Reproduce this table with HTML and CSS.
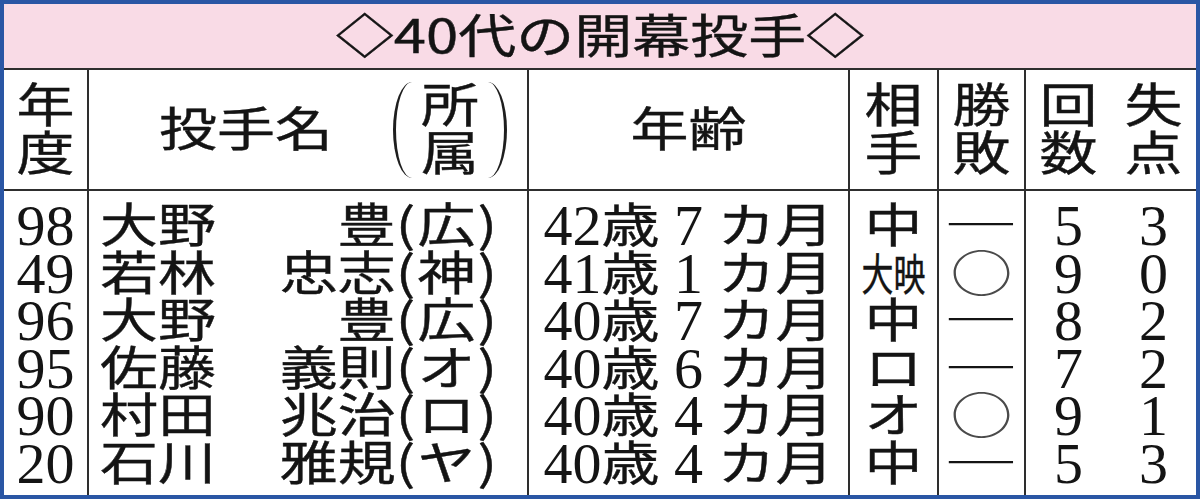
FILE: index.html
```html
<!DOCTYPE html>
<html lang="ja">
<head>
<meta charset="utf-8">
<title>40代の開幕投手</title>
<link rel="stylesheet" href="styles.css">
</head>
<body>
<div class="board">
  <div class="title"><span class="k">◇40代の開幕投手◇</span></div>
  <div class="table">
    <div class="row head">
      <div class="cell"><div class="stack"><span class="k">年</span><span class="k">度</span></div></div>
      <div class="cell name"><span class="k">投手名</span><span class="aff"><span class="stack"><span class="k">所</span><span class="k">属</span></span></span></div>
      <div class="cell"><span class="k">年齢</span></div>
      <div class="cell"><div class="stack"><span class="k">相</span><span class="k">手</span></div></div>
      <div class="cell"><div class="stack"><span class="k">勝</span><span class="k">敗</span></div></div>
      <div class="cell"><div class="stack"><span class="k">回</span><span class="k">数</span></div></div>
      <div class="cell"><div class="stack"><span class="k">失</span><span class="k">点</span></div></div>
    </div>
    <div class="row first">
      <div class="cell"><span class="num">98</span></div>
      <div class="cell name"><span class="k fam">大野</span><span class="k">豊</span><span class="k team">(広)</span></div>
      <div class="cell"><span class="num">42</span><span class="k">歳</span><span class="num fw">7</span><span class="k">カ月</span></div>
      <div class="cell"><span class="k">中</span></div>
      <div class="cell"><span class="k mark">―</span></div>
      <div class="cell"><span class="num">5</span></div>
      <div class="cell"><span class="num">3</span></div>
    </div>
    <div class="row">
      <div class="cell"><span class="num">49</span></div>
      <div class="cell name"><span class="k fam">若林</span><span class="k">忠志</span><span class="k team">(神)</span></div>
      <div class="cell"><span class="num">41</span><span class="k">歳</span><span class="num fw">1</span><span class="k">カ月</span></div>
      <div class="cell"><span class="k small">大映</span></div>
      <div class="cell"><span class="k circle">○</span></div>
      <div class="cell"><span class="num">9</span></div>
      <div class="cell"><span class="num">0</span></div>
    </div>
    <div class="row">
      <div class="cell"><span class="num">96</span></div>
      <div class="cell name"><span class="k fam">大野</span><span class="k">豊</span><span class="k team">(広)</span></div>
      <div class="cell"><span class="num">40</span><span class="k">歳</span><span class="num fw">7</span><span class="k">カ月</span></div>
      <div class="cell"><span class="k">中</span></div>
      <div class="cell"><span class="k mark">―</span></div>
      <div class="cell"><span class="num">8</span></div>
      <div class="cell"><span class="num">2</span></div>
    </div>
    <div class="row">
      <div class="cell"><span class="num">95</span></div>
      <div class="cell name"><span class="k fam">佐藤</span><span class="k">義則</span><span class="k team">(オ)</span></div>
      <div class="cell"><span class="num">40</span><span class="k">歳</span><span class="num fw">6</span><span class="k">カ月</span></div>
      <div class="cell"><span class="k">ロ</span></div>
      <div class="cell"><span class="k mark">―</span></div>
      <div class="cell"><span class="num">7</span></div>
      <div class="cell"><span class="num">2</span></div>
    </div>
    <div class="row">
      <div class="cell"><span class="num">90</span></div>
      <div class="cell name"><span class="k fam">村田</span><span class="k">兆治</span><span class="k team">(ロ)</span></div>
      <div class="cell"><span class="num">40</span><span class="k">歳</span><span class="num fw">4</span><span class="k">カ月</span></div>
      <div class="cell"><span class="k">オ</span></div>
      <div class="cell"><span class="k circle">○</span></div>
      <div class="cell"><span class="num">9</span></div>
      <div class="cell"><span class="num">1</span></div>
    </div>
    <div class="row last">
      <div class="cell"><span class="num">20</span></div>
      <div class="cell name"><span class="k fam">石川</span><span class="k">雅規</span><span class="k team">(ヤ)</span></div>
      <div class="cell"><span class="num">40</span><span class="k">歳</span><span class="num fw">4</span><span class="k">カ月</span></div>
      <div class="cell"><span class="k">中</span></div>
      <div class="cell"><span class="k mark">―</span></div>
      <div class="cell"><span class="num">5</span></div>
      <div class="cell"><span class="num">3</span></div>
    </div>
  </div>
</div>
</body>
</html>
```

FILE: styles.css
```css
html, body {
  margin: 0;
  padding: 0;
  background: #ffffff;
}

.board {
  width: 1200px;
  height: 499px;
  box-sizing: border-box;
  border: 4px solid #2a56a4;
  background: #ffffff;
  display: flex;
  flex-direction: column;
  color: #141414;
}

.title {
  height: 66px;
  flex: none;
  box-sizing: border-box;
  background: #f9dbe6;
  border-bottom: 2px solid #2e2e2e;
  display: flex;
  align-items: center;
  justify-content: center;
}

.title .k {
  line-height: 64px;
}

.table {
  flex: 1;
  display: grid;
  grid-template-columns: 85px 440px 321px 89px 87px 85px 85px;
}

.row {
  display: contents;
}

.cell {
  display: flex;
  align-items: center;
  justify-content: center;
  box-sizing: border-box;
}

.cell:nth-child(-n+5) {
  border-right: 2px solid #2e2e2e;
}

.head .cell {
  height: 121px;
  border-bottom: 2px solid #2e2e2e;
}

.first .cell {
  padding-top: 11px;
}

.last .cell {
  padding-bottom: 8px;
}

.k {
  display: inline-block;
  font-family: "Noto Sans CJK JP", sans-serif;
  font-size: 58px;
  font-weight: 400;
  -webkit-text-stroke: 0.5px #141414;
  line-height: 47.5px;
  white-space: nowrap;
  transform: translateY(-3px) scaleY(0.8);
}

.num {
  font-family: "Liberation Serif", "Times New Roman", serif;
  font-size: 58px;
  line-height: 47.5px;
}

.fw {
  width: 58px;
  text-align: center;
}

.stack {
  display: flex;
  flex-direction: column;
  align-items: center;
}

.cell.name {
  justify-content: flex-start;
  padding-left: 11px;
  padding-right: 28px;
}

.head .cell.name {
  justify-content: space-between;
  padding-left: 70px;
  padding-right: 20px;
}

.fam {
  flex: 1;
  transform-origin: left center;
}

.team {
  letter-spacing: 2px;
}

.aff {
  display: flex;
  align-items: center;
  gap: 9px;
}

.aff::before,
.aff::after {
  content: "";
  width: 19px;
  height: 96px;
  box-sizing: border-box;
}

.aff::before {
  border-left: 3px solid #1e1e1e;
  border-radius: 19px 0 0 19px / 48px 0 0 48px;
}

.aff::after {
  border-right: 3px solid #1e1e1e;
  border-radius: 0 19px 19px 0 / 0 48px 48px 0;
}

.mark {
  font-weight: 700;
  -webkit-text-stroke: 0;
  transform: translateY(-3px) scale(1.3, 0.8);
}

.circle {
  color: #4a4a4a;
  -webkit-text-stroke: 0;
  font-size: 62px;
}

.small {
  font-size: 32px;
  -webkit-text-stroke: 0.3px #141414;
  transform: translateY(-1px) scaleY(1.4);
}
```
